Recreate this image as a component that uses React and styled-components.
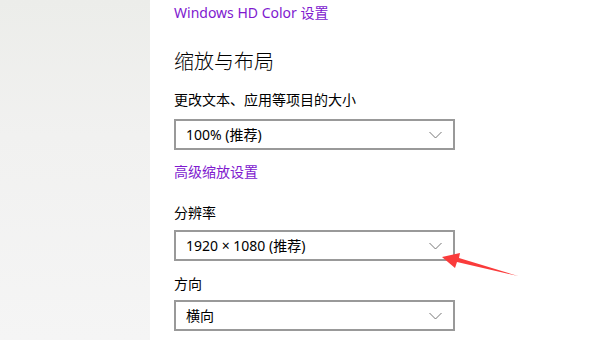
import React from 'react'
import styled, { createGlobalStyle } from 'styled-components'

const GlobalStyle = createGlobalStyle`
  html, body {
    margin: 0;
    padding: 0;
    background: #ffffff;
  }
  body {
    font-family: "Noto Sans", "Noto Sans CJK SC", sans-serif;
  }
`

const Page = styled.div`
  position: relative;
  display: flex;
  width: 601px;
  height: 340px;
  overflow: hidden;
`

const Sidebar = styled.div`
  width: 150px;
  flex-shrink: 0;
  background: linear-gradient(180deg, #ecedea 0%, #f1f1f0 40%, #f5f5f5 100%);
`

const Main = styled.div`
  flex: 1;
  display: flex;
  flex-direction: column;
  padding-left: 24px;
`

const Link = styled.div`
  color: #8019cf;
  font-size: 14px;
  line-height: 20px;
  height: 20px;
  margin-top: ${p => p.top}px;
`

const Heading = styled.div`
  color: #000;
  font-size: 20px;
  font-weight: 300;
  line-height: 28px;
  height: 28px;
  margin-top: 25px;
`

const Label = styled.div`
  color: #000;
  font-size: 14px;
  line-height: 20px;
  height: 20px;
  margin-top: ${p => p.top}px;
`

const Select = styled.div`
  box-sizing: border-box;
  width: 281px;
  height: 31px;
  flex-shrink: 0;
  border: 2px solid #999999;
  display: flex;
  align-items: center;
  justify-content: space-between;
  padding: 0 11px 0 10px;
  margin-top: ${p => p.top}px;
  font-size: 14px;
  line-height: 20px;
  color: #000;
`

const Chevron = () => (
  <svg width="13" height="8" viewBox="0 0 13 8">
    <path d="M0.5 1 L6.5 7 L12.5 1" fill="none" stroke="#777" strokeWidth="1" />
  </svg>
)

const Pointer = styled.svg`
  position: absolute;
  left: 0;
  top: 0;
  pointer-events: none;
`

export default function App() {
  return (
    <Page>
      <GlobalStyle />
      <Sidebar />
      <Main>
        <Link top={3}>Windows HD Color 设置</Link>
        <Heading>缩放与布局</Heading>
        <Label top={14}>更改文本、应用等项目的大小</Label>
        <Select top={9}>
          <span>100% (推荐)</span>
          <Chevron />
        </Select>
        <Link top={12}>高级缩放设置</Link>
        <Label top={21}>分辨率</Label>
        <Select top={7}>
          <span>1920 × 1080 (推荐)</span>
          <Chevron />
        </Select>
        <Label top={13}>方向</Label>
        <Select top={6}>
          <span>横向</span>
          <Chevron />
        </Select>
      </Main>
      <Pointer width="601" height="340">
        <polygon
          points="442,257 460,253 459,258 518,276 457,262 455,268"
          fill="#fa3b3b"
        />
      </Pointer>
    </Page>
  )
}
